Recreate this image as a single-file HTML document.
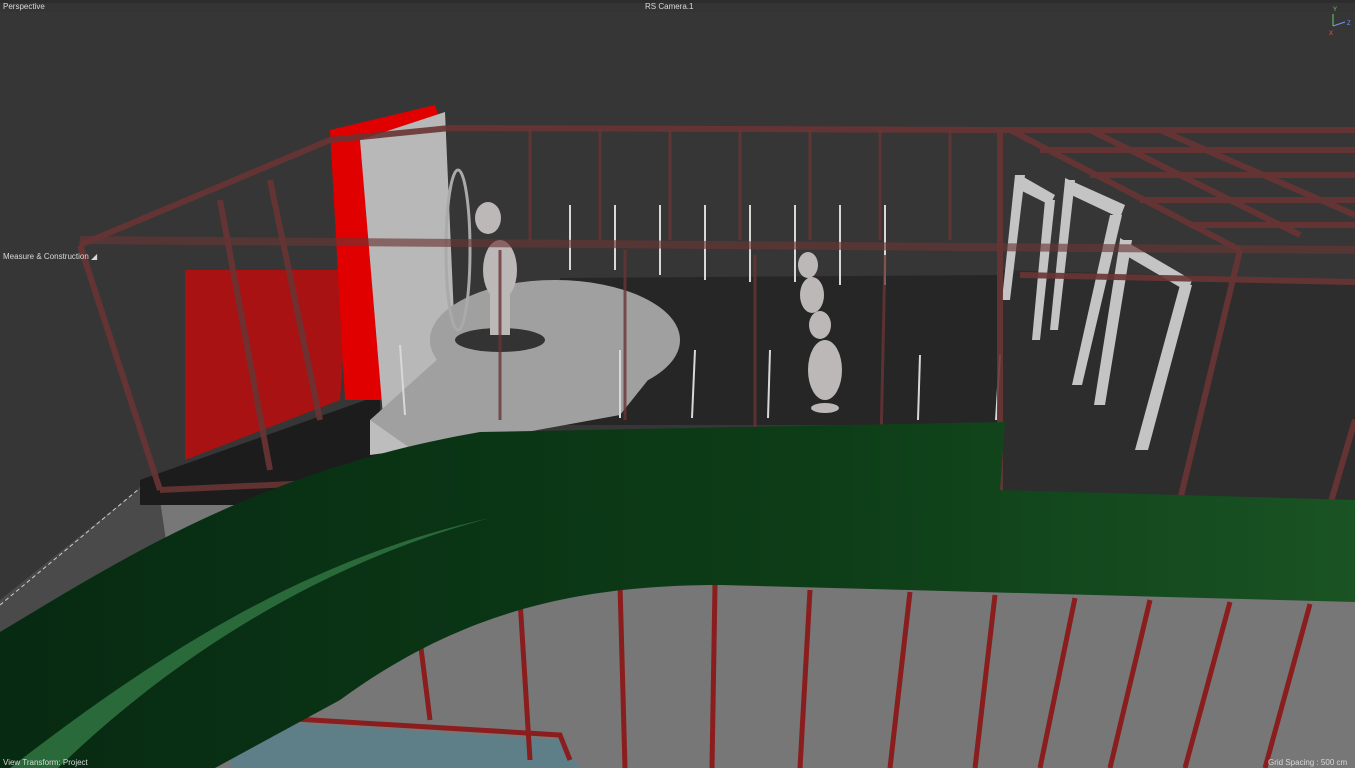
<!DOCTYPE html>
<html><head><meta charset="utf-8"><style>
html,body{margin:0;padding:0;background:#353535;overflow:hidden}
svg{display:block}
text{font-family:"Liberation Sans",sans-serif;font-size:8px;fill:#d8d8d8}
</style></head><body>
<svg width="1355" height="768" viewBox="0 0 1355 768" xmlns="http://www.w3.org/2000/svg">
<rect width="1355" height="768" fill="#363636"/>
<rect width="1355" height="3" fill="#222"/>
<polygon points="0,600 140,488 200,500 200,768 0,768" fill="#4a4a4a"/>
<line x1="0" y1="605" x2="140" y2="488" stroke="#ccc" stroke-width="1" stroke-dasharray="4,3"/>
<polygon points="160,500 1355,500 1355,768 200,768" fill="#777"/>
<polygon points="240,720 560,740 580,768 230,768" fill="#5e7f88"/>
<g stroke="#8a1d1d" stroke-width="5">
<line x1="420" y1="640" x2="430" y2="720"/><line x1="520" y1="600" x2="530" y2="760"/>
<line x1="620" y1="585" x2="625" y2="768"/><line x1="715" y1="585" x2="712" y2="768"/>
<line x1="810" y1="590" x2="800" y2="768"/><line x1="910" y1="592" x2="890" y2="768"/>
<line x1="995" y1="595" x2="975" y2="768"/><line x1="1075" y1="598" x2="1040" y2="768"/>
<line x1="1150" y1="600" x2="1110" y2="768"/><line x1="1230" y1="602" x2="1185" y2="768"/>
<line x1="1310" y1="604" x2="1265" y2="768"/>
<polyline points="230,715 560,735 570,760" fill="none"/>
</g>
<polygon points="560,278 1010,275 1010,425 530,425" fill="#262626"/>
<polygon points="1000,270 1355,280 1355,505 1000,495" fill="#2d2d2d"/>
<polygon points="185,270 350,270 340,400 185,460" fill="#a81212"/>
<polygon points="140,480 380,395 380,505 140,505" fill="#1c1c1c"/>
<polygon points="330,130 435,105 440,120 385,140 385,400 345,400" fill="#e00000"/>
<polygon points="360,140 445,112 455,340 385,440" fill="#b8b8b8"/>
<ellipse cx="555" cy="340" rx="125" ry="60" fill="#a0a0a0"/>
<polygon points="370,420 470,330 680,340 620,415 400,455" fill="#a0a0a0"/>
<polygon points="370,420 420,455 520,435 370,455" fill="#bdbdbd"/>
<ellipse cx="500" cy="340" rx="45" ry="12" fill="#333"/>
<g fill="#bdb8b8">
<ellipse cx="488" cy="218" rx="13" ry="16"/><ellipse cx="500" cy="270" rx="17" ry="30"/>
<rect x="490" y="295" width="20" height="40"/>
<ellipse cx="808" cy="265" rx="10" ry="13"/><ellipse cx="812" cy="295" rx="12" ry="18"/>
<ellipse cx="820" cy="325" rx="11" ry="14"/><ellipse cx="825" cy="370" rx="17" ry="30"/>
<ellipse cx="825" cy="408" rx="14" ry="5"/>
</g>
<ellipse cx="458" cy="250" rx="12" ry="80" fill="none" stroke="#aaa" stroke-width="3"/>
<g stroke="#d8d8d8" stroke-width="2">
<line x1="570" y1="205" x2="570" y2="270"/><line x1="615" y1="205" x2="615" y2="270"/>
<line x1="660" y1="205" x2="660" y2="275"/><line x1="705" y1="205" x2="705" y2="280"/>
<line x1="750" y1="205" x2="750" y2="282"/><line x1="795" y1="205" x2="795" y2="282"/>
<line x1="840" y1="205" x2="840" y2="285"/><line x1="885" y1="205" x2="885" y2="285"/>
<line x1="620" y1="350" x2="620" y2="418"/><line x1="695" y1="350" x2="692" y2="418"/>
<line x1="770" y1="350" x2="768" y2="418"/><line x1="920" y1="355" x2="918" y2="420"/>
<line x1="1000" y1="355" x2="996" y2="420"/>
<line x1="400" y1="345" x2="405" y2="415"/>
</g>
<g fill="#c4c4c4">
<polygon points="1015,175 1025,175 1010,300 1002,300"/><polygon points="1020,175 1055,195 1050,205 1020,190"/>
<polygon points="1045,200 1055,200 1040,340 1032,340"/>
<polygon points="1065,180 1075,180 1058,330 1050,330"/><polygon points="1065,178 1125,205 1120,218 1065,192"/>
<polygon points="1110,215 1122,215 1082,385 1072,385"/>
<polygon points="1120,240 1132,240 1105,405 1094,405"/><polygon points="1120,238 1192,280 1188,292 1120,252"/>
<polygon points="1180,285 1192,285 1148,450 1135,450"/>
</g>
<g stroke="#6a3434" stroke-width="6" fill="none" opacity="0.9">
<polyline points="80,245 330,140 450,128 1000,130 1355,130"/>
<line x1="80" y1="240" x2="1355" y2="250" stroke-width="8" opacity="0.7"/>
<line x1="80" y1="245" x2="160" y2="490"/>
<line x1="160" y1="490" x2="380" y2="480"/>
<line x1="220" y1="200" x2="270" y2="470"/>
<line x1="270" y1="180" x2="320" y2="420"/>
<line x1="1000" y1="130" x2="1000" y2="495"/>
<line x1="1240" y1="250" x2="1180" y2="500"/>
<line x1="1355" y1="420" x2="1330" y2="505"/>
<line x1="1010" y1="130" x2="1240" y2="250"/>
<line x1="1090" y1="130" x2="1300" y2="235"/>
<line x1="1160" y1="130" x2="1355" y2="215"/>
<line x1="1040" y1="150" x2="1355" y2="150"/>
<line x1="1090" y1="175" x2="1355" y2="175"/>
<line x1="1140" y1="200" x2="1355" y2="200"/>
<line x1="1190" y1="225" x2="1355" y2="225"/>
<line x1="1020" y1="275" x2="1355" y2="282"/>
</g>
<g stroke="#6a3434" stroke-width="3" opacity="0.8">
<line x1="530" y1="130" x2="530" y2="240"/><line x1="600" y1="130" x2="600" y2="240"/>
<line x1="670" y1="130" x2="670" y2="240"/><line x1="740" y1="130" x2="740" y2="240"/>
<line x1="810" y1="130" x2="810" y2="240"/><line x1="880" y1="130" x2="880" y2="240"/>
<line x1="950" y1="130" x2="950" y2="240"/>
<line x1="500" y1="250" x2="500" y2="420"/><line x1="625" y1="250" x2="625" y2="420"/>
<line x1="755" y1="255" x2="755" y2="490"/><line x1="885" y1="255" x2="880" y2="490"/>
</g>
<defs><linearGradient id="g" x1="0" x2="1"><stop offset="0" stop-color="#072a12"/><stop offset="0.6" stop-color="#0d3d17"/><stop offset="1" stop-color="#1a5324"/></linearGradient></defs>
<path d="M0,632 C120,560 260,470 480,432 L1005,422 L1000,490 L1355,500 L1355,602 L720,585 C560,585 450,620 340,700 L215,768 L0,768 Z" fill="url(#g)"/>
<path d="M490,518 C300,560 150,660 10,768 L58,768 C180,650 330,560 490,518 Z" fill="#2a6a3a"/>
<rect y="0" width="1355" height="12" fill="#333" opacity="0.6"/>
<text x="3" y="9">Perspective</text>
<text x="645" y="9">RS Camera.1</text>
<text x="3" y="259">Measure &amp; Construction ◢</text>
<text x="3" y="765">View Transform: Project</text>
<text x="1268" y="765">Grid Spacing : 500 cm</text>
<text x="1333" y="11" style="font-size:6px;fill:#6c6">Y</text><text x="1347" y="25" style="font-size:6px;fill:#69f">Z</text><text x="1329" y="35" style="font-size:6px;fill:#e55">X</text>
<line x1="1333" y1="14" x2="1333" y2="26" stroke="#6c6"/><line x1="1333" y1="26" x2="1345" y2="22" stroke="#69f"/>
</svg>
</body></html>
